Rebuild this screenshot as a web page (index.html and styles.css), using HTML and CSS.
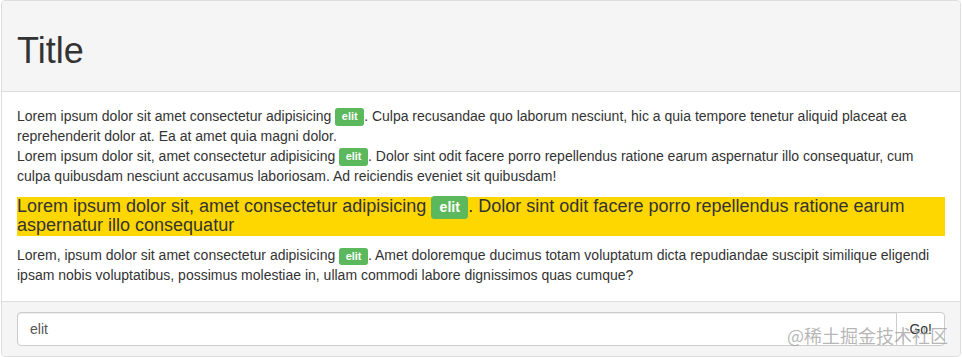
FILE: index.html
```html
<!DOCTYPE html>
<html lang="en">
<head>
    <meta charset="UTF-8">
    <meta name="viewport" content="width=device-width, initial-scale=1.0">
    <title>Panel</title>
    <link rel="stylesheet" href="styles.css">
</head>
<body>
    <div class="panel">
        <div class="panel-heading">
            <h1>Title</h1>
        </div>
        <div class="panel-body">
            Lorem ipsum dolor sit amet consectetur adipisicing <span class="label">elit</span>. Culpa recusandae quo laborum nesciunt, hic a quia tempore tenetur aliquid placeat ea reprehenderit dolor at. Ea at amet quia magni dolor.<br>
            Lorem ipsum dolor sit, amet consectetur adipisicing <span class="label">elit</span>. Dolor sint odit facere porro repellendus ratione earum aspernatur illo consequatur, cum culpa quibusdam nesciunt accusamus laboriosam. Ad reiciendis eveniet sit quibusdam!
            <h4 class="mark">Lorem ipsum dolor sit, amet consectetur adipisicing <span class="label">elit</span>. Dolor sint odit facere porro repellendus ratione earum aspernatur illo consequatur</h4>
            Lorem, ipsum dolor sit amet consectetur adipisicing <span class="label">elit</span>. Amet doloremque ducimus totam voluptatum dicta repudiandae suscipit similique eligendi ipsam nobis voluptatibus, possimus molestiae in, ullam commodi labore dignissimos quas cumque?
        </div>
        <div class="panel-footer">
            <div class="input-group">
                <input type="text" class="search" value="elit">
                <button type="button" class="btn">Go!</button>
            </div>
        </div>
        <div class="watermark">@稀土掘金技术社区</div>
    </div>
</body>
</html>
```
FILE: styles.css
```css
body{
    margin: 0;
    font-family: "Liberation Sans", Arial, sans-serif;
    font-size: 14px;
    line-height: 1.42857;
    color: #333;
}
.panel{
    position: relative;
    margin: 0 1px;
    border: 1px solid #ddd;
    border-radius: 4px;
    background: #fff;
}
.panel-heading{
    padding: 10px 15px;
    background: #f5f5f5;
    border-bottom: 1px solid #ddd;
    border-radius: 3px 3px 0 0;
}
.panel-heading h1{
    margin: 20px 0 10px;
    font-size: 36px;
    font-weight: 500;
    line-height: 1.1;
}
.panel-body{
    padding: 15px;
}
.mark{
    margin: 10px 0;
    font-size: 18px;
    font-weight: 500;
    line-height: 1.1;
    background: #ffd700;
}
.label{
    padding: .2em .6em .3em;
    font-size: 78%;
    font-weight: bold;
    line-height: 1;
    color: #fff;
    background: #5cb85c;
    border-radius: .25em;
    white-space: nowrap;
    vertical-align: baseline;
}
.panel-footer{
    padding: 10px 15px;
    background: #f5f5f5;
    border-top: 1px solid #ddd;
    border-radius: 0 0 3px 3px;
}
.input-group{
    display: flex;
}
.search{
    flex: 1;
    height: 34px;
    box-sizing: border-box;
    padding: 6px 12px;
    font-family: inherit;
    font-size: 14px;
    color: #555;
    border: 1px solid #ccc;
    border-radius: 4px 0 0 4px;
    box-shadow: inset 0 1px 1px rgba(0,0,0,.075);
    outline: none;
}
.btn{
    height: 34px;
    padding: 6px 12px;
    margin-left: -1px;
    font-family: inherit;
    font-size: 14px;
    color: #333;
    background: #fff;
    border: 1px solid #ccc;
    border-radius: 0 4px 4px 0;
}
.watermark{
    position: absolute;
    right: 12px;
    bottom: 12px;
    font-family: "Noto Sans CJK SC", sans-serif;
    font-size: 18px;
    line-height: 1;
    color: rgba(150,150,150,.7);
    pointer-events: none;
}
```
